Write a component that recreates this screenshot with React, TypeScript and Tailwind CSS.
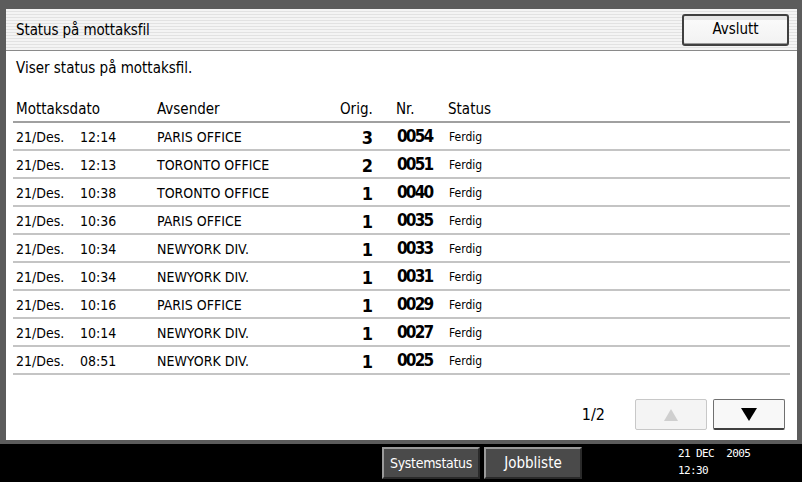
import { useState } from "react";

const rows = [
  { date: "21/Des.", time: "12:14", sender: "PARIS OFFICE", orig: 3, nr: "0054", status: "Ferdig" },
  { date: "21/Des.", time: "12:13", sender: "TORONTO OFFICE", orig: 2, nr: "0051", status: "Ferdig" },
  { date: "21/Des.", time: "10:38", sender: "TORONTO OFFICE", orig: 1, nr: "0040", status: "Ferdig" },
  { date: "21/Des.", time: "10:36", sender: "PARIS OFFICE", orig: 1, nr: "0035", status: "Ferdig" },
  { date: "21/Des.", time: "10:34", sender: "NEWYORK DIV.", orig: 1, nr: "0033", status: "Ferdig" },
  { date: "21/Des.", time: "10:34", sender: "NEWYORK DIV.", orig: 1, nr: "0031", status: "Ferdig" },
  { date: "21/Des.", time: "10:16", sender: "PARIS OFFICE", orig: 1, nr: "0029", status: "Ferdig" },
  { date: "21/Des.", time: "10:14", sender: "NEWYORK DIV.", orig: 1, nr: "0027", status: "Ferdig" },
  { date: "21/Des.", time: "08:51", sender: "NEWYORK DIV.", orig: 1, nr: "0025", status: "Ferdig" },
];

const font = "font-['DejaVu_Sans_Condensed','Liberation_Sans_Narrow',sans-serif]";

export default function App() {
  const [page] = useState("1/2");

  return (
    <div className={`w-[802px] h-[482px] bg-black text-black ${font} overflow-hidden`}>
      <div className="h-[444px] bg-[#5c5c5c] pt-[9px] pl-[6px] pr-[5px] pb-[4px]">
        <div className="h-full bg-white flex flex-col">
          {/* title bar */}
          <div className="h-[42px] flex items-center justify-between pl-[10px] pr-[8px] border-b border-[#8a8a8a] bg-[repeating-linear-gradient(to_bottom,#f4f4f4_0px,#f4f4f4_2px,#e2e2e2_2px,#e2e2e2_3px)]">
            <span className="text-[15px] tracking-[-0.1px] mt-[2px]">Status på mottaksfil</span>
            <button
              type="button"
              className="w-[107px] h-[32px] rounded-[3px] border-2 border-[#404040] bg-[linear-gradient(to_bottom,#e6e6e6_0px,#e6e6e6_4px,#fafafa_4px,#f2f2f2_100%)] text-[15px] shadow-[inset_0_-1px_0_#999]"
            >
              Avslutt
            </button>
          </div>

          <div className="pl-[10px] pt-[8px] text-[15px] leading-[18px]">Viser status på mottaksfil.</div>

          {/* table */}
          <div className="mx-[7px] mt-[23px]">
            <div className="flex items-end h-[23px] pl-[3px] pb-[3px] text-[15px] leading-[18px] border-b-2 border-[#a0a0a0]">
              <span className="w-[141px]">Mottaksdato</span>
              <span className="w-[183px]">Avsender</span>
              <span className="w-[56px]">Orig.</span>
              <span className="w-[52px]">Nr.</span>
              <span>Status</span>
            </div>
            {rows.map((r, i) => (
              <div key={i} className="flex items-center h-[28px] pl-[3px] pt-[2px] border-b-2 border-[#c4c4c4]">
                <span className="w-[64px] text-[14px]">{r.date}</span>
                <span className="w-[77px] text-[14px]">{r.time}</span>
                <span className="w-[150px] text-[14px]">{r.sender}</span>
                <span className="w-[66px] text-right text-[18px] font-bold">{r.orig}</span>
                <span className="w-[28px] pl-[24px] box-content text-[17px] font-bold tracking-[-1.8px]">{r.nr}</span>
                <span className="ml-[24px] text-[12px]">{r.status}</span>
              </div>
            ))}
          </div>

          {/* pager */}
          <div className="flex-1 flex items-start justify-end pr-[12px] pt-[24px] gap-[6px]">
            <span className="text-[16px] mr-[24px] mt-[4px]">{page}</span>
            <button
              type="button"
              disabled
              className="w-[72px] h-[31px] rounded-[2px] border border-[#c8c8c8] bg-[#f4f4f4] flex items-center justify-center"
            >
              <svg width="14" height="12" viewBox="0 0 14 12">
                <path d="M7 0 L14 12 L0 12 Z" fill="#cfcfcf" />
              </svg>
            </button>
            <button
              type="button"
              className="w-[72px] h-[31px] rounded-[2px] border border-[#707070] border-b-2 border-b-[#404040] bg-[#f8f8f8] flex items-center justify-center"
            >
              <svg width="16" height="13" viewBox="0 0 16 13">
                <path d="M0 0 L16 0 L8 13 Z" fill="#000" />
              </svg>
            </button>
          </div>
        </div>
      </div>

      {/* bottom bar */}
      <div className="h-[38px] flex items-center pl-[382px] gap-[4px]">
        <button
          type="button"
          className="w-[98px] h-[32px] border-2 border-t-[#9a9a9a] border-l-[#9a9a9a] border-r-[#2a2a2a] border-b-[#2a2a2a] bg-[#4a4a4a] text-white text-[14px] tracking-[-0.3px]"
        >
          Systemstatus
        </button>
        <button
          type="button"
          className="w-[98px] h-[32px] border-2 border-t-[#9a9a9a] border-l-[#9a9a9a] border-r-[#2a2a2a] border-b-[#2a2a2a] bg-[#4a4a4a] text-white text-[15px]"
        >
          Jobbliste
        </button>
        <div className="ml-[92px] mb-[2px] text-white text-[11px] leading-[17px] tracking-[-0.6px] font-['DejaVu_Sans_Mono',monospace]">
          <div className="whitespace-pre">21 DEC  2005</div>
          <div>12:30</div>
        </div>
      </div>
    </div>
  );
}
